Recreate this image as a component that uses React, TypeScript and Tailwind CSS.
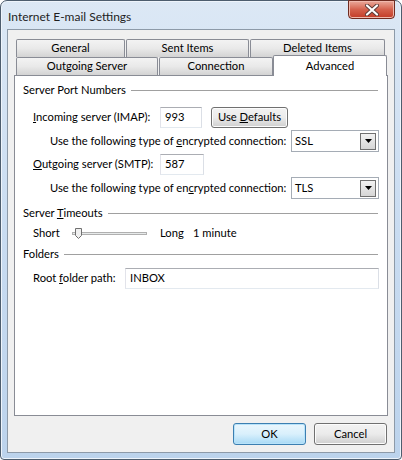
import React from 'react';

const font = { fontFamily: 'Lato, "Liberation Sans", Arial, sans-serif' };

function GroupHeader({ title }: { title: React.ReactNode }) {
  return (
    <div className="flex items-center h-[15px] pl-[8px] pr-[9px]">
      <span className="whitespace-nowrap">{title}</span>
      <div className="flex-1 ml-[5px] h-[2px] border-t border-[#a0a0a0] border-b border-b-white" />
    </div>
  );
}

function TextBox({ value, className }: { value: string; className: string }) {
  return (
    <div
      className={`h-[21px] flex items-center pl-[4px] bg-white border border-[#abadb3] border-l-[#e2e3ea] border-r-[#dbdfe6] border-b-[#e3e9ef] ${className}`}
    >
      {value}
    </div>
  );
}

function Select({ value }: { value: string }) {
  return (
    <div className="w-[88px] h-[22px] flex items-center justify-between bg-white border border-[#a5acb5] pl-[3px] pr-[2px]">
      <span>{value}</span>
      <div className="w-[16px] h-[17px] flex items-center justify-center border border-[#707070] bg-gradient-to-b from-[#f2f2f2] to-[#d6d6d6]">
        <svg width="7" height="4" viewBox="0 0 7 4">
          <path d="M0 0h7L3.5 4z" fill="#000" />
        </svg>
      </div>
    </div>
  );
}

function Tab({ label, w, row }: { label: string; w: number; row: 1 | 2 }) {
  return (
    <div
      className={`h-[18px] flex items-center justify-center rounded-t-[2px] border-[#898c95] border-l border-r border-t bg-gradient-to-b from-[#f3f3f3] via-[#e9e9e9] to-[#d3d3d3] ${row === 1 ? 'pb-[1px]' : ''}`}
      style={{ width: w }}
    >
      {label}
    </div>
  );
}

function Button({ children, primary }: { children: React.ReactNode; primary?: boolean }) {
  return (
    <div
      className={`w-[73px] h-[22px] flex items-center justify-center rounded-[3px] border ${
        primary
          ? 'border-[#3c7fb1] bg-gradient-to-b from-[#eaf6fd] via-[#d9f0fc] to-[#a7d9f5] shadow-[inset_0_0_0_1px_#b8e3fa]'
          : 'border-[#707070] bg-gradient-to-b from-[#f2f2f2] via-[#ebebeb] to-[#cfcfcf] shadow-[inset_0_0_0_1px_#fcfcfc]'
      }`}
    >
      {children}
    </div>
  );
}

export default function App() {
  return (
    <div className="w-[402px] h-[460px] text-[11.2px] text-black select-none whitespace-nowrap" style={font}>
      <div className="w-full h-full flex flex-col rounded-t-[7px] rounded-b-[4px] border border-[#4d5d6e] bg-gradient-to-b from-[#dce8f5] via-[#c9dcf1] to-[#bcd3ec] shadow-[inset_0_0_0_1px_#eef4fb]">
        {/* title bar */}
        <div className="h-[28px] flex items-start justify-between">
          <div className="pl-[7px] pt-[8px] text-[12px] leading-[15px] text-[#1e1e1e]">Internet E-mail Settings</div>
          <div className="mr-[6px] w-[47px] h-[19px] -mt-px flex items-center justify-center rounded-b-[4px] border border-[#6f2b20] bg-gradient-to-b from-[#e9a99b] via-[#d4614d] to-[#c23a25] shadow-[inset_0_0_0_1px_#f0b9ad]">
            <svg width="14" height="12" viewBox="0 0 14 12">
              <path d="M2 1.5 L12 10.5 M12 1.5 L2 10.5" stroke="#5a3a36" strokeWidth="4" strokeLinecap="round" />
              <path d="M2 1.5 L12 10.5 M12 1.5 L2 10.5" stroke="#ffffff" strokeWidth="2.2" strokeLinecap="round" />
            </svg>
          </div>
        </div>

        {/* client area */}
        <div className="mx-[6px] h-[424px] border border-[#8d9aa8] bg-[#f0f0f0] pl-[6px] pt-[9px] pr-[6px]">
          {/* tab strip */}
          <div className="flex flex-col">
            <div className="flex pl-[2px] gap-[1px]">
              <Tab label="General" w={109} row={1} />
              <Tab label="Sent Items" w={123} row={1} />
              <Tab label="Deleted Items" w={135} row={1} />
            </div>
            <div className="flex pl-[2px]">
              <Tab label="Outgoing Server" w={142} row={2} />
              <div className="ml-[1px]">
                <Tab label="Connection" w={114} row={2} />
              </div>
              <div className="relative z-10 -mt-[2px] -mb-px w-[114px] h-[21px] flex justify-center pt-[2px] bg-white border-l border-r border-t border-[#898c95] rounded-t-[2px]">
                Advanced
              </div>
            </div>
          </div>

          {/* panel */}
          <div className="w-[374px] h-[341px] bg-white border border-[#898c95] flex flex-col">
            <div className="mt-[7px]">
              <GroupHeader title="Server Port Numbers" />
            </div>

            <div className="mt-[8px] h-[22px] flex items-center pl-[18px]">
              <span className="w-[127px]">
                <u>I</u>ncoming server (IMAP):
              </span>
              <TextBox value="993" className="w-[42px]" />
              <div className="ml-[9px] w-[77px] h-[21px] flex items-center justify-center rounded-[3px] border border-[#707070] bg-gradient-to-b from-[#f2f2f2] via-[#ebebeb] to-[#cfcfcf] shadow-[inset_0_0_0_1px_#fcfcfc]">
                <span>
                  Use <u>D</u>efaults
                </span>
              </div>
            </div>

            <div className="mt-[2px] h-[22px] flex items-center pl-[35px]">
              <span className="w-[241px]">
                Use the following type of <u>e</u>ncrypted connection:
              </span>
              <Select value="SSL" />
            </div>

            <div className="mt-px h-[22px] flex items-center pl-[18px]">
              <span className="w-[127px]">
                <u>O</u>utgoing server (SMTP):
              </span>
              <TextBox value="587" className="w-[44px]" />
            </div>

            <div className="mt-[2px] h-[22px] flex items-center pl-[35px]">
              <span className="w-[241px]">
                Use the following type of en<u>c</u>rypted connection:
              </span>
              <Select value="TLS" />
            </div>

            <div className="mt-[7px]">
              <GroupHeader
                title={
                  <>
                    Server <u>T</u>imeouts
                  </>
                }
              />
            </div>

            <div className="mt-[5px] h-[15px] flex items-center pl-[18px]">
              <span className="w-[39px]">Short</span>
              <svg width="76" height="14" viewBox="0 0 76 14" className="shrink-0">
                <rect x="0.5" y="5.5" width="74" height="2" fill="#e7eaea" stroke="#b0b0b0" strokeWidth="1" />
                <path d="M3.5 1.5h6v7l-3 3-3-3z" fill="#f0f0f0" stroke="#707070" strokeWidth="1" />
              </svg>
              <span className="ml-[12px] w-[33px]">Long</span>
              <span>1 minute</span>
            </div>

            <div className="mt-[6px]">
              <GroupHeader title="Folders" />
            </div>

            <div className="mt-[6px] h-[21px] flex items-center pl-[18px] pr-[8px]">
              <span className="w-[92px]">
                Root <u>f</u>older path:
              </span>
              <TextBox value="INBOX" className="flex-1" />
            </div>
          </div>

          {/* dialog buttons */}
          <div className="mt-[7px] flex justify-end gap-[8px] pr-px">
            <Button primary>OK</Button>
            <Button>Cancel</Button>
          </div>
        </div>
      </div>
    </div>
  );
}
